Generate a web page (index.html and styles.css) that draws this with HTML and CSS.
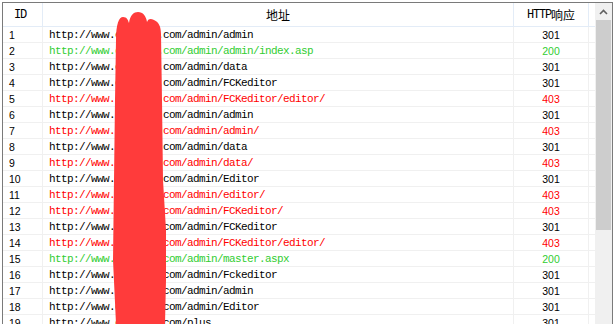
FILE: index.html
```html
<!DOCTYPE html>
<html>
<head>
<meta charset="utf-8">
<link rel="stylesheet" href="styles.css">
</head>
<body>
<div class="frame">
  <div class="list">
    <div class="head">
      <div class="c c1 hid"><span class="lat">ID</span></div>
      <div class="c c2 hmid">地址</div>
      <div class="c c3 hmid"><span class="lat">HTTP</span>响应</div>
      <div class="c c4"></div>
    </div>
    <div class="row"><div class="c c1 num">1</div><div class="c c2 url">http://www.example.com/admin/admin</div><div class="c c3 num st">301</div><div class="c c4"></div></div>
    <div class="row ok"><div class="c c1 num">2</div><div class="c c2 url">http://www.example.com/admin/admin/index.asp</div><div class="c c3 num st">200</div><div class="c c4"></div></div>
    <div class="row"><div class="c c1 num">3</div><div class="c c2 url">http://www.example.com/admin/data</div><div class="c c3 num st">301</div><div class="c c4"></div></div>
    <div class="row"><div class="c c1 num">4</div><div class="c c2 url">http://www.example.com/admin/FCKeditor</div><div class="c c3 num st">301</div><div class="c c4"></div></div>
    <div class="row bad"><div class="c c1 num">5</div><div class="c c2 url">http://www.example.com/admin/FCKeditor/editor/</div><div class="c c3 num st">403</div><div class="c c4"></div></div>
    <div class="row"><div class="c c1 num">6</div><div class="c c2 url">http://www.example.com/admin/admin</div><div class="c c3 num st">301</div><div class="c c4"></div></div>
    <div class="row bad"><div class="c c1 num">7</div><div class="c c2 url">http://www.example.com/admin/admin/</div><div class="c c3 num st">403</div><div class="c c4"></div></div>
    <div class="row"><div class="c c1 num">8</div><div class="c c2 url">http://www.example.com/admin/data</div><div class="c c3 num st">301</div><div class="c c4"></div></div>
    <div class="row bad"><div class="c c1 num">9</div><div class="c c2 url">http://www.example.com/admin/data/</div><div class="c c3 num st">403</div><div class="c c4"></div></div>
    <div class="row"><div class="c c1 num">10</div><div class="c c2 url">http://www.example.com/admin/Editor</div><div class="c c3 num st">301</div><div class="c c4"></div></div>
    <div class="row bad"><div class="c c1 num">11</div><div class="c c2 url">http://www.example.com/admin/editor/</div><div class="c c3 num st">403</div><div class="c c4"></div></div>
    <div class="row bad"><div class="c c1 num">12</div><div class="c c2 url">http://www.example.com/admin/FCKeditor/</div><div class="c c3 num st">403</div><div class="c c4"></div></div>
    <div class="row"><div class="c c1 num">13</div><div class="c c2 url">http://www.example.com/admin/FCKeditor</div><div class="c c3 num st">301</div><div class="c c4"></div></div>
    <div class="row bad"><div class="c c1 num">14</div><div class="c c2 url">http://www.example.com/admin/FCKeditor/editor/</div><div class="c c3 num st">403</div><div class="c c4"></div></div>
    <div class="row ok"><div class="c c1 num">15</div><div class="c c2 url">http://www.example.com/admin/master.aspx</div><div class="c c3 num st">200</div><div class="c c4"></div></div>
    <div class="row"><div class="c c1 num">16</div><div class="c c2 url">http://www.example.com/admin/Fckeditor</div><div class="c c3 num st">301</div><div class="c c4"></div></div>
    <div class="row"><div class="c c1 num">17</div><div class="c c2 url">http://www.example.com/admin/admin</div><div class="c c3 num st">301</div><div class="c c4"></div></div>
    <div class="row"><div class="c c1 num">18</div><div class="c c2 url">http://www.example.com/admin/Editor</div><div class="c c3 num st">301</div><div class="c c4"></div></div>
    <div class="row"><div class="c c1 num">19</div><div class="c c2 url">http://www.example.com/plus</div><div class="c c3 num st">301</div><div class="c c4"></div></div>
  </div>
  <div class="scroll">
    <div class="sbtn">
      <svg width="17" height="17" viewBox="0 0 17 17"><polyline points="5,11 8.5,7.5 12,11" fill="none" stroke="#606060" stroke-width="1.6"/></svg>
    </div>
    <div class="thumb"></div>
  </div>
</div>
<svg class="scribble" width="616" height="324" viewBox="0 0 616 324">
  <path d="M116,324 L113,260 L114,180 L115,100 L116,40 C116,24 119,17 123,17 C127,17 128,20 129,23 C130,15 134,12 138,12 C143,12 146,16 147,22 C149,18 151,19 154,20 C159,22 161,27 161,34 L162,100 L163,180 L166,230 L166,280 L165,324 Z" fill="#ff3b3b"/>
</svg>
</body>
</html>
```

FILE: styles.css
```css
html, body {
  margin: 0;
  padding: 0;
  background: #ffffff;
  overflow: hidden;
}

.frame {
  margin: 2px 0 0 2px;
  width: 611px;
  height: 360px;
  box-sizing: border-box;
  border: 1px solid #7a7a7a;
  display: flex;
  overflow: hidden;
}

.list {
  width: 592px;
  display: flex;
  flex-direction: column;
}

.head {
  display: flex;
  height: 24px;
  box-sizing: border-box;
  border-bottom: 1px solid #e3ecf7;
  font-family: "Noto Sans CJK SC", sans-serif;
  font-size: 12px;
  color: #000;
}

.head .c {
  border-right: 1px solid #e3ecf7;
  display: flex;
  align-items: center;
}

.head .c4 { border-right: none; }

.hid { padding-left: 11px; }
.hmid { justify-content: center; }

.lat {
  font-family: "Liberation Mono", monospace;
  font-size: 12px;
  letter-spacing: -1.2px;
}

.row {
  display: flex;
  height: 16px;
  box-sizing: border-box;
  border-bottom: 1px solid #f0f0f0;
  color: #000;
}

.row .c {
  border-right: 1px solid #f0f0f0;
  display: flex;
  align-items: center;
  white-space: nowrap;
  overflow: hidden;
}

.row .c4 { border-right: none; }

.row.ok .url, .row.ok .st { color: #32cd32; }
.row.bad .url, .row.bad .st { color: #ff0000; }

.c {
  box-sizing: border-box;
  height: 100%;
}

.c1 { width: 40px; }
.c2 { width: 471px; }
.c3 { width: 75px; }
.c4 { width: 6px; }

.num {
  font-family: "Liberation Sans", sans-serif;
  font-size: 10.5px;
}

.row .c1 { padding-left: 6px; }
.row .st { justify-content: center; }

.url {
  font-family: "Liberation Mono", monospace;
  font-size: 11px;
  letter-spacing: -0.6px;
  padding-left: 6px;
}

.scroll {
  width: 17px;
  background: #f0f0f0;
  display: flex;
  flex-direction: column;
}

.sbtn {
  height: 17px;
  display: flex;
}

.thumb {
  margin: 0 1px 0 1px;
  height: 210px;
  background: #cdcdcd;
}

.scribble {
  position: absolute;
  left: 0;
  top: 0;
}
```
